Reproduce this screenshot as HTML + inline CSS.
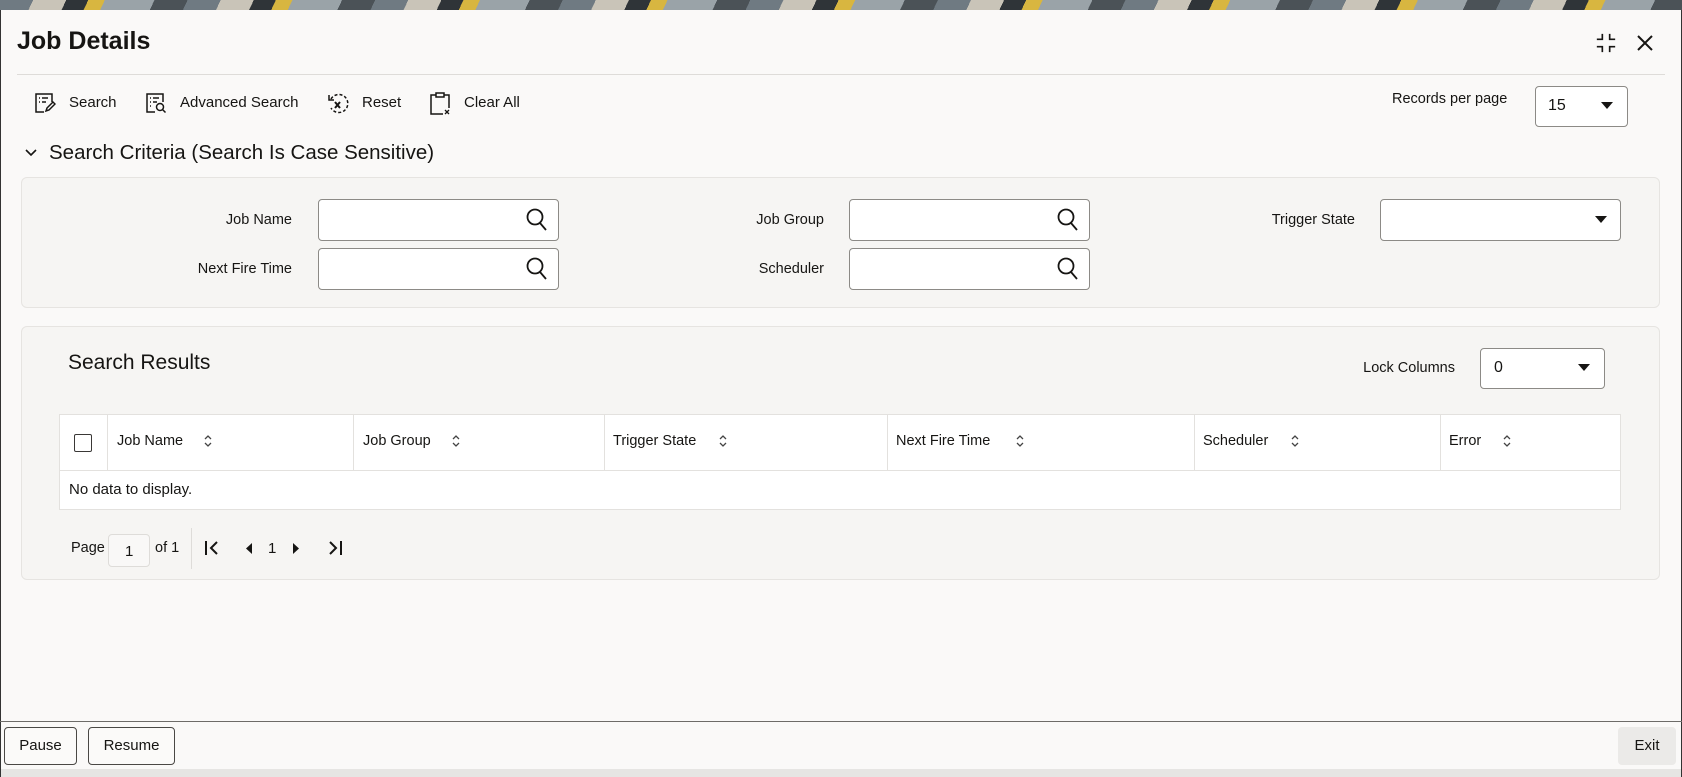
<!DOCTYPE html>
<html><head><meta charset="utf-8"><style>
*{box-sizing:border-box;margin:0;padding:0}
body{width:1682px;height:777px;overflow:hidden;font-family:"Liberation Sans",sans-serif;color:#161513;background:#faf9f8;position:relative}
.a{position:absolute}
.band{left:0;top:0;width:1682px;height:10px;background:repeating-linear-gradient(115deg,#6f7a82 0 30px,#c9c4b8 30px 60px,#2f3438 60px 80px,#d8b640 80px 95px,#9aa3a8 95px 140px,#4b5257 140px 170px)}
.frame{left:0;top:10px;width:1682px;height:767px;border-left:1px solid #333;border-right:1px solid #333}
.t{white-space:nowrap}
.lbl{font-size:14.5px;color:#161513;text-align:right}
.inp{background:#fff;border:1px solid #8c8a86;border-radius:4px}
.panel{background:#f6f5f3;border:1px solid #e6e4e1;border-radius:6px}
.th{font-size:14.5px;top:433px}
.vb{top:414px;width:1px;height:56px;background:#e3e1de}
.btn{border:1px solid #4a4845;border-radius:4px;background:#fbfaf9;font-size:15px;text-align:center;line-height:36px}
</style></head><body>
<div class="a band"></div>
<div class="a frame"></div>

<div class="a t" style="left:17px;top:27px;font-size:25px;font-weight:bold">Job Details</div>
<svg class="a" style="left:1595px;top:32px" width="22" height="22" viewBox="0 0 24 24" fill="none" stroke="#161513" stroke-width="1.8"><path d="M8 2v6H2M16 2v6h6M8 22v-6H2M16 22v-6h6"/></svg>
<svg class="a" style="left:1636px;top:34px" width="18" height="18" viewBox="0 0 18 18" stroke="#161513" stroke-width="2"><path d="M2 2l14 14M16 2L2 16"/></svg>
<div class="a" style="left:17px;top:74px;width:1648px;height:1px;background:#dedcd9"></div>

<!-- toolbar -->
<svg class="a" style="left:34px;top:92px" width="22" height="22" viewBox="0 0 22 22" fill="none" stroke="#161513" stroke-width="1.5"><path d="M10 20H2V2h16v8"/><path d="M5 6h1M8 6h6M5 10h1M8 10h4"/><path d="M12 19l1-3 6-6 2 2-6 6z"/></svg>
<div class="a t" style="left:69px;top:94px;font-size:15px">Search</div>
<svg class="a" style="left:145px;top:92px" width="22" height="22" viewBox="0 0 22 22" fill="none" stroke="#161513" stroke-width="1.5"><path d="M10 20H2V2h16v8"/><path d="M5 6h1M8 6h6M5 10h1M8 10h4M5 14h1"/><circle cx="15" cy="15" r="3.5"/><path d="M17.5 17.5l3 3"/></svg>
<div class="a t" style="left:180px;top:94px;font-size:15px">Advanced Search</div>
<svg class="a" style="left:326px;top:91px" width="24" height="24" viewBox="0 0 24 24" fill="none" stroke="#161513" stroke-width="1.5"><path d="M5 8a9 9 0 1 1 0 9" stroke-dasharray="3 2"/><path d="M3 4v5h5"/><path d="M9 11l5 6M14 11l-5 6" stroke-width="2"/></svg>
<div class="a t" style="left:362px;top:94px;font-size:15px">Reset</div>
<svg class="a" style="left:429px;top:91px" width="22" height="24" viewBox="0 0 22 24" fill="none" stroke="#161513" stroke-width="1.5"><path d="M7 4H2v19h12M15 4h5v13"/><rect x="7" y="2" width="8" height="4"/><path d="M16 19l4 4M20 19l-4 4" stroke-width="1.3"/></svg>
<div class="a t" style="left:464px;top:94px;font-size:15px">Clear All</div>

<div class="a t" style="left:1392px;top:91px;font-size:14.5px">Records per page</div>
<div class="a inp" style="left:1535px;top:86px;width:93px;height:41px"></div>
<div class="a t" style="left:1548px;top:97px;font-size:16px">15</div>
<svg class="a" style="left:1601px;top:102px" width="12" height="8"><path d="M0 0h12L6 7z" fill="#161513"/></svg>

<!-- criteria -->
<svg class="a" style="left:25px;top:148px" width="12" height="10" viewBox="0 0 12 10" fill="none" stroke="#161513" stroke-width="1.6"><path d="M1 2l5 5 5-5"/></svg>
<div class="a t" style="left:49px;top:141px;font-size:20.5px">Search Criteria (Search Is Case Sensitive)</div>
<div class="a panel" style="left:21px;top:177px;width:1639px;height:131px"></div>

<div class="a t lbl" style="left:150px;width:142px;top:212px">Job Name</div>
<div class="a t lbl" style="left:150px;width:142px;top:261px">Next Fire Time</div>
<div class="a t lbl" style="left:680px;width:144px;top:212px">Job Group</div>
<div class="a t lbl" style="left:680px;width:144px;top:261px">Scheduler</div>
<div class="a t lbl" style="left:1200px;width:155px;top:212px">Trigger State</div>

<div class="a inp" style="left:318px;top:199px;width:241px;height:42px"></div>
<div class="a inp" style="left:318px;top:248px;width:241px;height:42px"></div>
<div class="a inp" style="left:849px;top:199px;width:241px;height:42px"></div>
<div class="a inp" style="left:849px;top:248px;width:241px;height:42px"></div>
<div class="a inp" style="left:1380px;top:199px;width:241px;height:42px"></div>
<svg class="a" style="left:1595px;top:216px" width="12" height="8"><path d="M0 0h12L6 7z" fill="#161513"/></svg>
<svg class="a" style="left:526px;top:208px" width="22" height="24" viewBox="0 0 22 24" fill="none" stroke="#161513" stroke-width="1.8"><circle cx="9" cy="9" r="7.5"/><path d="M14 15l6 7"/></svg>
<svg class="a" style="left:526px;top:257px" width="22" height="24" viewBox="0 0 22 24" fill="none" stroke="#161513" stroke-width="1.8"><circle cx="9" cy="9" r="7.5"/><path d="M14 15l6 7"/></svg>
<svg class="a" style="left:1057px;top:208px" width="22" height="24" viewBox="0 0 22 24" fill="none" stroke="#161513" stroke-width="1.8"><circle cx="9" cy="9" r="7.5"/><path d="M14 15l6 7"/></svg>
<svg class="a" style="left:1057px;top:257px" width="22" height="24" viewBox="0 0 22 24" fill="none" stroke="#161513" stroke-width="1.8"><circle cx="9" cy="9" r="7.5"/><path d="M14 15l6 7"/></svg>

<!-- results -->
<div class="a panel" style="left:21px;top:326px;width:1639px;height:254px"></div>
<div class="a t" style="left:68px;top:351px;font-size:21px">Search Results</div>
<div class="a t lbl" style="left:1340px;width:115px;top:360px">Lock Columns</div>
<div class="a inp" style="left:1480px;top:348px;width:125px;height:41px"></div>
<div class="a t" style="left:1494px;top:359px;font-size:16px">0</div>
<svg class="a" style="left:1578px;top:364px" width="12" height="8"><path d="M0 0h12L6 7z" fill="#161513"/></svg>

<div class="a" style="left:59px;top:414px;width:1562px;height:96px;background:#fff;border:1px solid #e3e1de"></div>
<div class="a" style="left:59px;top:470px;width:1562px;height:1px;background:#e3e1de"></div>
<div class="a" style="left:74px;top:434px;width:18px;height:18px;border:1.5px solid #3a3836;border-radius:2px;background:#fff"></div>
<div class="a vb" style="left:107px"></div>
<div class="a vb" style="left:353px"></div>
<div class="a vb" style="left:604px"></div>
<div class="a vb" style="left:887px"></div>
<div class="a vb" style="left:1194px"></div>
<div class="a vb" style="left:1440px"></div>
<div class="a t th" style="left:117px">Job Name</div>
<div class="a t th" style="left:363px">Job Group</div>
<div class="a t th" style="left:613px">Trigger State</div>
<div class="a t th" style="left:896px">Next Fire Time</div>
<div class="a t th" style="left:1203px">Scheduler</div>
<div class="a t th" style="left:1449px">Error</div>
<svg class="a" style="left:203px;top:434px" width="10" height="14" viewBox="0 0 10 14" fill="none" stroke="#444" stroke-width="1.3"><path d="M2 5l3-3 3 3M2 9l3 3 3-3"/></svg>
<svg class="a" style="left:451px;top:434px" width="10" height="14" viewBox="0 0 10 14" fill="none" stroke="#444" stroke-width="1.3"><path d="M2 5l3-3 3 3M2 9l3 3 3-3"/></svg>
<svg class="a" style="left:718px;top:434px" width="10" height="14" viewBox="0 0 10 14" fill="none" stroke="#444" stroke-width="1.3"><path d="M2 5l3-3 3 3M2 9l3 3 3-3"/></svg>
<svg class="a" style="left:1015px;top:434px" width="10" height="14" viewBox="0 0 10 14" fill="none" stroke="#444" stroke-width="1.3"><path d="M2 5l3-3 3 3M2 9l3 3 3-3"/></svg>
<svg class="a" style="left:1290px;top:434px" width="10" height="14" viewBox="0 0 10 14" fill="none" stroke="#444" stroke-width="1.3"><path d="M2 5l3-3 3 3M2 9l3 3 3-3"/></svg>
<svg class="a" style="left:1502px;top:434px" width="10" height="14" viewBox="0 0 10 14" fill="none" stroke="#444" stroke-width="1.3"><path d="M2 5l3-3 3 3M2 9l3 3 3-3"/></svg>
<div class="a t" style="left:69px;top:481px;font-size:15px">No data to display.</div>

<!-- pagination -->
<div class="a t" style="left:71px;top:540px;font-size:14.5px">Page</div>
<div class="a" style="left:108px;top:534px;width:42px;height:33px;border:1px solid #dedcd9;border-radius:4px;background:#f9f8f7"></div>
<div class="a t" style="left:125px;top:543px;font-size:15px">1</div>
<div class="a t" style="left:155px;top:540px;font-size:14.5px">of 1</div>
<div class="a" style="left:191px;top:528px;width:1px;height:41px;background:#dedcd9"></div>
<svg class="a" style="left:204px;top:540px" width="16" height="16" viewBox="0 0 16 16" fill="none" stroke="#161513" stroke-width="2"><path d="M2 1v14M13 2L7 8l6 6"/></svg>
<svg class="a" style="left:245px;top:543px" width="8" height="11"><path d="M7 0v11L1 5.5z" fill="#161513"/></svg>
<div class="a t" style="left:268px;top:540px;font-size:15px">1</div>
<svg class="a" style="left:292px;top:543px" width="8" height="11"><path d="M1 0v11l6-5.5z" fill="#161513"/></svg>
<svg class="a" style="left:327px;top:540px" width="16" height="16" viewBox="0 0 16 16" fill="none" stroke="#161513" stroke-width="2"><path d="M14 1v14M3 2l6 6-6 6"/></svg>

<!-- footer -->
<div class="a" style="left:0;top:721px;width:1682px;height:1px;background:#6d6b68"></div>
<div class="a btn" style="left:4px;top:727px;width:73px;height:38px">Pause</div>
<div class="a btn" style="left:88px;top:727px;width:87px;height:38px">Resume</div>
<div class="a" style="left:1618px;top:727px;width:58px;height:38px;background:#ebeae8;border-radius:4px;font-size:15px;line-height:38px;text-align:center">Exit</div>
<div class="a" style="left:0;top:769px;width:1682px;height:8px;background:#e6e5e3;border-left:1px solid #333;border-right:1px solid #333"></div>
</body></html>
